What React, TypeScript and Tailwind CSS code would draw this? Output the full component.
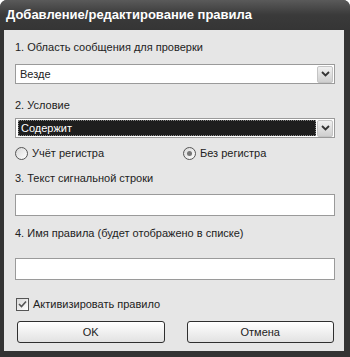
import React from "react";

const font = { fontFamily: "'Liberation Sans', Arial, sans-serif" };

function Arrow() {
  return (
    <div className="flex h-[17px] w-[16px] items-center justify-center rounded-[2px] border border-[#c4c4c4] bg-gradient-to-b from-[#f0f0f0] to-[#cfcfcf]">
      <svg width="9" height="6" viewBox="0 0 9 6">
        <path d="M1 1 L4.5 4.5 L8 1" fill="none" stroke="#333" strokeWidth="1.8" />
      </svg>
    </div>
  );
}

function Select({ value, selected }: { value: string; selected?: boolean }) {
  return (
    <div className="flex h-[20px] items-center border border-[#9a9a9a] bg-white pl-[2px] pr-[1px]">
      <div
        className={`flex h-[16px] flex-1 items-center px-[2px] ${
          selected ? "border border-dotted border-[#888] bg-[#1e1e1e] text-white" : "text-[#222]"
        }`}
      >
        {value}
      </div>
      <div className="ml-[1px]">
        <Arrow />
      </div>
    </div>
  );
}

function Radio({ checked, label }: { checked?: boolean; label: string }) {
  return (
    <label className="flex items-center gap-[4px]">
      <span className="flex h-[13px] w-[13px] items-center justify-center rounded-full border border-[#555] bg-gradient-to-br from-[#d8d8d8] to-white">
        {checked && <span className="h-[5px] w-[5px] rounded-full bg-[#777]" />}
      </span>
      {label}
    </label>
  );
}

function Button({ children }: { children: React.ReactNode }) {
  return (
    <div className="flex h-[22px] flex-1 items-center justify-center rounded-[3px] border border-[#2f2f2f] bg-gradient-to-b from-white to-[#e2e2e2]">
      {children}
    </div>
  );
}

export default function App() {
  return (
    <div className="h-[357px] w-[350px] bg-white" style={font}>
      <div className="flex h-full flex-col overflow-hidden rounded-t-[7px] bg-[#333]">
        {/* title */}
        <div className="flex h-[30px] shrink-0 items-center bg-gradient-to-b from-[#5a5a5a] via-[#3a3a3a] to-[#353535] pl-[6px]">
          <span className="text-[13px] font-bold text-white">Добавление/редактирование правила</span>
        </div>

        <div className="mb-[6px] ml-[4px] mr-[6px] flex flex-1 flex-col bg-[#e6e6e6] pl-[11px] pr-[9px] pt-[10px] text-[11px] leading-[14px] text-[#222]">
          <div>1. Область сообщения для проверки</div>
          <div className="mt-[10px]">
            <Select value="Везде" />
          </div>

          <div className="mt-[14px]">2. Условие</div>
          <div className="mt-[6px]">
            <Select value="Содержит" selected />
          </div>

          <div className="mt-[8px] flex">
            <div className="w-[168px]">
              <Radio label="Учёт регистра" />
            </div>
            <Radio label="Без регистра" checked />
          </div>

          <div className="mt-[11px]">3. Текст сигнальной строки</div>
          <div className="mt-[9px] h-[22px] border border-[#9a9a9a] bg-white" />

          <div className="mt-[10px]">4. Имя правила (будет отображено в списке)</div>
          <div className="mt-[18px] h-[22px] border border-[#9a9a9a] bg-white" />

          <label className="mt-[17px] flex items-center gap-[4px] pl-[1px]">
            <span className="flex h-[13px] w-[13px] items-center justify-center border border-[#555] bg-gradient-to-br from-[#d8d8d8] to-white">
              <svg width="9" height="8" viewBox="0 0 9 8">
                <path d="M1 4 L3.5 6.5 L8 1.5" fill="none" stroke="#555" strokeWidth="1.6" />
              </svg>
            </span>
            Активизировать правило
          </label>

          <div className="mt-[10px] flex gap-[22px] pl-[2px] pr-[1px]">
            <Button>OK</Button>
            <Button>Отмена</Button>
          </div>
        </div>
      </div>
    </div>
  );
}
